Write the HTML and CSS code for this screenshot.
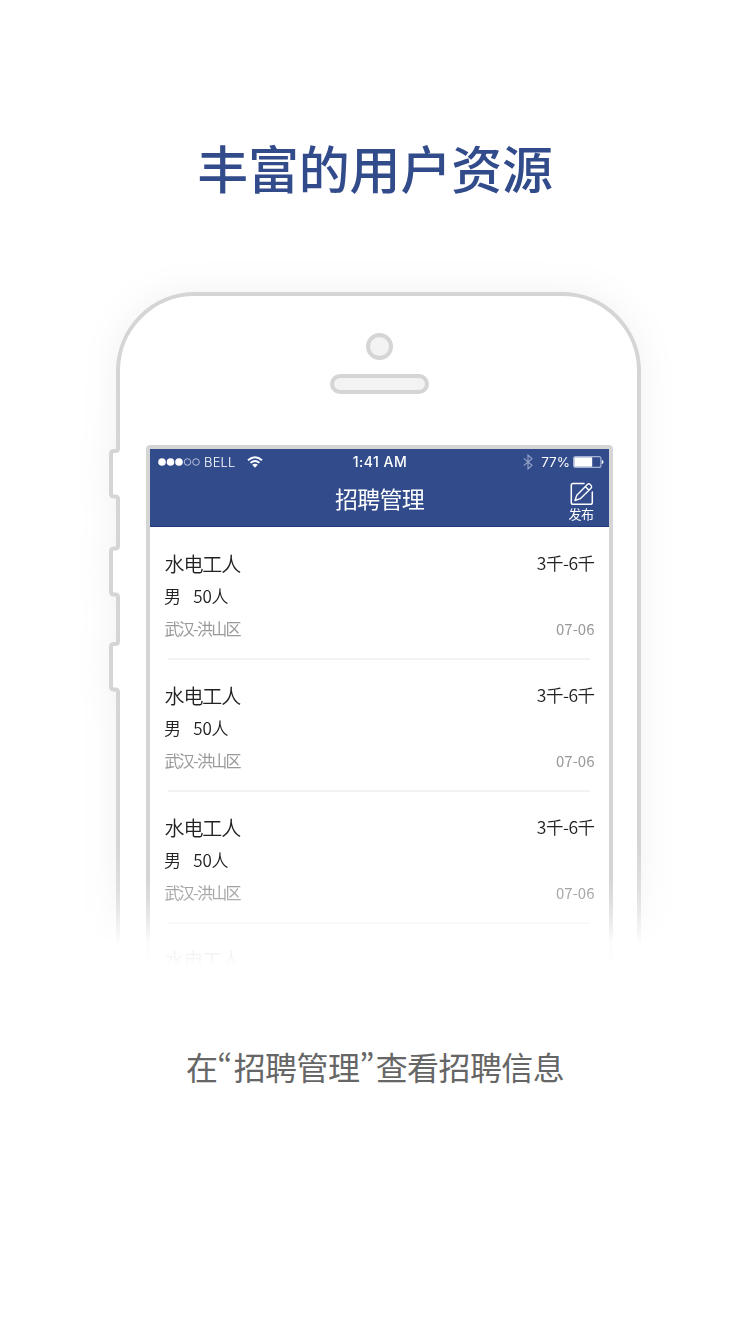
FILE: index.html
```html
<!DOCTYPE html>
<html lang="zh-CN">
<head>
<meta charset="utf-8">
<title>丰富的用户资源</title>
<link rel="stylesheet" href="styles.css">
</head>
<body>
<main class="page">
  <h1 class="headline">丰富的用户资源</h1>
  <section class="phone">
    <div class="shell-layer">
      <svg class="shell" width="750" height="760" viewBox="0 240 750 760">
        <path d="M118 1010V692Q118 689.500 115.500 689.500H114Q111 689.500 111 686.500V647Q111 644 114 644H115.500Q118 644 118 641.500V597Q118 594.500 115.500 594.500H114Q111 594.500 111 591.500V551.500Q111 548.500 114 548.500H115.500Q118 548.500 118 546V499Q118 496.500 115.500 496.500H114Q111 496.500 111 493.500V454Q111 451 114 451H115.500Q118 451 118 448.500V371A77 77 0 0 1 195 294H562A77 77 0 0 1 639 371V1010Z"/>
      </svg>
    </div>
    <div class="camera"></div>
    <div class="speaker"></div>
    <div class="screen">
      <header class="bar">
        <div class="status">
          <div class="carrier">
            <svg width="43" height="10" viewBox="0 0 43 10"><g fill="#fff"><circle cx="4" cy="5" r="3.800"/><circle cx="12.500" cy="5" r="3.800"/><circle cx="21" cy="5" r="3.800"/></g><g fill="none" stroke="#c4cce2" stroke-width=".9"><circle cx="29.500" cy="5" r="3.300"/><circle cx="38" cy="5" r="3.300"/></g></svg>
            <span class="network">BELL</span>
            <svg class="wifi" width="16" height="12" viewBox="0 0 16 12"><g fill="none" stroke="#fff" stroke-width="1.900"><path d="M1 4.200Q8-1.700 15 4.200"/><path d="M3.500 6.900Q8 3 12.500 6.900"/></g><path fill="#fff" d="M5.200 8.800Q8 6.500 10.800 8.800L8 11.700Z"/></svg>
          </div>
          <span class="time">1:41 AM</span>
          <div class="power">
            <svg class="bluetooth" width="10" height="16" viewBox="0 0 10 16"><path fill="none" stroke="#98a5c9" stroke-width="1.100" d="M.8 4.300 9 11.300 5 15V1L9 4.700.8 11.700"/></svg>
            <span class="percent">77%</span>
            <svg width="31" height="12" viewBox="0 0 31 12"><rect x=".6" y=".6" width="27.300" height="10.800" rx="2" fill="none" stroke="#a6b3d5" stroke-width="1.200"/><rect x="1.300" y="1.300" width="17.900" height="9.400" fill="#fff"/><path fill="#fff" d="M28.800 4Q30.500 4.200 30.500 6T28.800 8Z"/></svg>
          </div>
        </div>
        <div class="nav">
          <span></span>
          <h2 class="nav-title">招聘管理</h2>
          <div class="publish">
            <svg width="24" height="24" viewBox="0 0 24 24" fill="none" stroke="#fff" stroke-width="1.500" stroke-linejoin="round" stroke-linecap="round"><path d="M14 1.500H3Q1.300 1.500 1.300 3.200V20.500Q1.300 22.300 3 22.300H20.500Q22.300 22.300 22.300 20.500V10"/><path d="M5 18.500 6.800 13.200 17.400 2.500Q18.600 1.300 20 2.300L21.200 3.600Q22.300 4.900 21 6.200L10.300 16.700ZM15.300 4.600 18.900 8.200" stroke-width="1.400"/></svg>
            <span>发布</span>
          </div>
        </div>
      </header>
      <div class="list">
        <article class="job"><div class="line"><h3>水电工人</h3><b>3千-6千</b></div><div class="need"><span>男</span><span>50人</span></div><div class="meta"><span class="place">武汉-洪山区</span><time>07-06</time></div></article>
        <article class="job"><div class="line"><h3>水电工人</h3><b>3千-6千</b></div><div class="need"><span>男</span><span>50人</span></div><div class="meta"><span class="place">武汉-洪山区</span><time>07-06</time></div></article>
        <article class="job"><div class="line"><h3>水电工人</h3><b>3千-6千</b></div><div class="need"><span>男</span><span>50人</span></div><div class="meta"><span class="place">武汉-洪山区</span><time>07-06</time></div></article>
        <article class="job"><div class="line"><h3>水电工人</h3></div></article>
      </div>
    </div>
  </section>
  <p class="caption">在<span class="quote">“</span>招聘管理<span class="quote">”</span>查看招聘信息</p>
</main>
</body>
</html>
```
FILE: styles.css
```css
* { box-sizing: border-box; margin: 0; padding: 0; }
body { background: #fff; font-family: "Noto Sans CJK SC", sans-serif; }
svg { display: block; flex: none; }
.page { width: 750px; height: 1334px; overflow: hidden; display: flex; flex-direction: column; align-items: center; padding-top: 129px; }
.headline { font-size: 51px; line-height: 76px; font-weight: 500; color: #324b8b; letter-spacing: -.2px; white-space: nowrap; }
.phone { position: relative; width: 750px; height: 762px; margin-top: 35px; padding: 93px 137px 0 146px; display: flex; flex-direction: column; align-items: center; }
/* Device outline sits behind the screen and fades out at the bottom */
.shell-layer { position: absolute; inset: 0; z-index: -1; height: 760px; -webkit-mask-image: linear-gradient(#000 605px, rgba(0,0,0,.75) 650px, rgba(0,0,0,.5) 674px, transparent 706px); mask-image: linear-gradient(#000 605px, rgba(0,0,0,.75) 650px, rgba(0,0,0,.5) 674px, transparent 706px); }
.shell { filter: drop-shadow(0 0 18px rgba(0,0,0,.055)); }
.shell path { fill: #fff; stroke: #d5d5d5; stroke-width: 4; }
.camera { width: 27px; height: 27px; border: 4px solid #d5d5d5; border-radius: 50%; background: #f3f3f3; }
.speaker { width: 99px; height: 20px; margin-top: 14px; border: 4px solid #d5d5d5; border-radius: 10px; background: #f3f3f3; }
.screen { width: 467px; height: 560px; margin-top: 51px; border: 4px solid #d5d5d5; border-bottom: 0; border-radius: 4px 4px 0 0; overflow: hidden; background: #fff; -webkit-mask-image: linear-gradient(#000 430px, rgba(0,0,0,.8) 455px, rgba(0,0,0,.5) 475px, rgba(0,0,0,.07) 497px, rgba(0,0,0,.05) 512px, transparent 521px); mask-image: linear-gradient(#000 430px, rgba(0,0,0,.8) 455px, rgba(0,0,0,.5) 475px, rgba(0,0,0,.07) 497px, rgba(0,0,0,.05) 512px, transparent 521px); }
.bar { height: 78px; background: #324b8b; color: #fff; border-bottom: 1px solid #21397d; }
.status { height: 26px; padding: 0 5px 0 8px; display: grid; grid-template-columns: 1fr auto 1fr; align-items: center; font-family: Inter, sans-serif; font-size: 13px; line-height: 26px; }
.carrier { display: flex; align-items: center; }
.network { margin-left: 3px; font-weight: 300; letter-spacing: .2px; }
.wifi { margin-left: 11px; }
.time { font-weight: 500; font-size: 14px; letter-spacing: .5px; margin-left: -2px; }
.power { display: flex; align-items: center; justify-content: flex-end; }
.percent { margin: 0 3px 0 8px; font-size: 13.500px; }
.nav { height: 51px; padding: 0 15px; display: grid; grid-template-columns: 1fr auto 1fr; }
.nav-title { font-size: 23px; line-height: 46px; font-weight: 400; letter-spacing: -.8px; }
.publish { justify-self: end; display: flex; flex-direction: column; align-items: center; padding-top: 7px; font-size: 13px; line-height: 16px; letter-spacing: -.4px; }
.publish svg { margin-left: 2px; }
.list { padding-top: 1px; }
.job { height: 132px; margin: 0 19px 0 18px; border-bottom: 2px solid #f2f2f2; padding-top: 21px; color: #222; font-weight: 300; }
.line, .meta { display: flex; justify-content: space-between; margin: 0 -4.500px 0 -3.500px; }
.line { height: 30px; line-height: 30px; }
.job h3 { font-size: 20px; font-weight: 350; letter-spacing: -1.1px; }
.job b { font-size: 17.500px; line-height: 28px; font-weight: 350; letter-spacing: -.5px; }
.need { display: flex; gap: 12.500px; margin-left: -4px; font-size: 17px; line-height: 34px; font-weight: 350; letter-spacing: -.2px; }
.meta { line-height: 31px; font-size: 15px; color: #999; font-weight: 400; }
.place { font-size: 16px; letter-spacing: -1.700px; }
.caption { margin-top: 40px; font-size: 32px; line-height: 48px; letter-spacing: -.6px; color: #666; font-weight: 400; white-space: nowrap; }
.quote { font-feature-settings: "pwid"; letter-spacing: 1.2px; }
```
